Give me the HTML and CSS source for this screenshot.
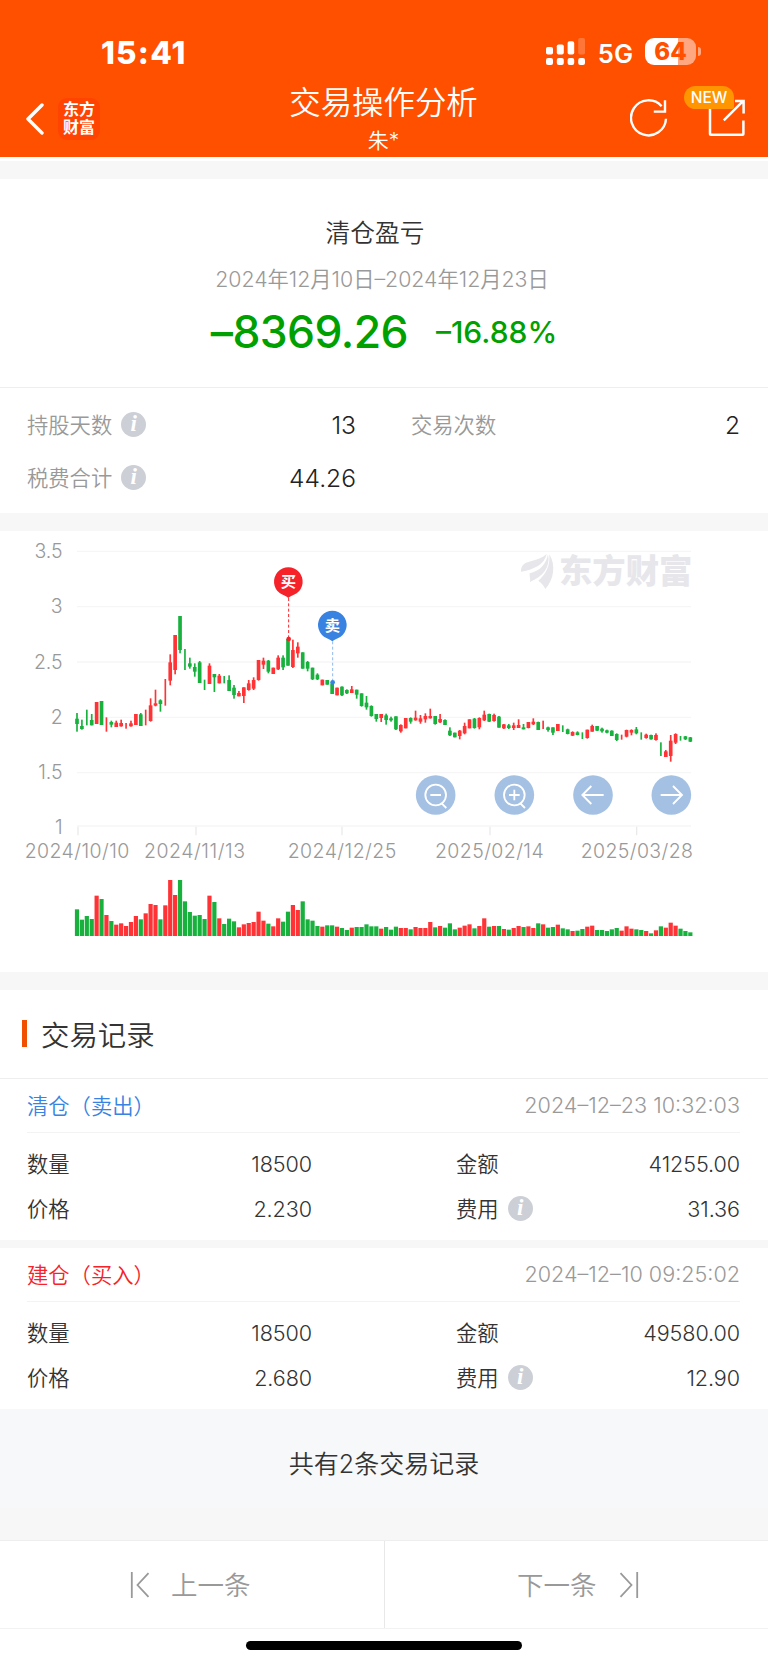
FILE: index.html
```html
<!DOCTYPE html>
<html lang="zh-CN">
<head>
    <meta charset="UTF-8">
    <meta name="viewport" content="width=device-width, initial-scale=1.0">
    <title>交易操作分析</title>
    <link rel="stylesheet" href="styles.css">
</head>

<body>
    <header class="header">
        <div class="status-bar">
            <span class="time">15:41</span>
            <div class="status-right">
                <svg class="signal" width="39" height="28" viewBox="0 0 39 28" fill="#fff">
                    <rect x="0" y="9" width="7" height="7.5" rx="1.8"/>
                    <rect x="10.8" y="6.5" width="7" height="10" rx="1.8"/>
                    <rect x="21.6" y="3.3" width="6.6" height="13.2" rx="1.8"/>
                    <rect x="32.2" y="0" width="6.8" height="16.5" rx="1.8" opacity=".22"/>
                    <rect x="0" y="20" width="7" height="7" rx="2"/>
                    <rect x="10.8" y="20" width="7" height="7" rx="2"/>
                    <rect x="21.6" y="20" width="6.6" height="7" rx="2"/>
                    <rect x="32.2" y="20" width="6.8" height="7" rx="2"/>
                </svg>
                <span class="network">5G</span>
                <div class="battery"><span>64</span></div>
            </div>
        </div>
        <div class="nav">
            <div class="nav-left">
                <svg width="18" height="32" viewBox="0 0 18 32" fill="none" stroke="#fff" stroke-width="3.4" stroke-linecap="round" stroke-linejoin="round">
                    <path d="M16 2L2 16l14 14"/>
                </svg>
                <div class="logo">东方<br>财富</div>
            </div>
            <div class="nav-title">
                <h1>交易操作分析</h1>
                <p>朱*</p>
            </div>
            <div class="nav-right">
                <svg width="38" height="38" viewBox="0 0 38 38" fill="none" stroke="#fff" stroke-width="2.4">
                    <path d="M36 19.8A17.5 17.5 0 1 1 31.6 7.2"/>
                    <path d="M35 1.2v11.4H23.8"/>
                </svg>
                <div class="share">
                    <svg width="38" height="38" viewBox="0 0 38 38" fill="none" stroke="#fff" stroke-width="2.5">
                        <path d="M2 8v27q0 .7.7.7h32q.7 0 .7-.7V21.4"/>
                        <path d="M15.8 21.4L35 2.2M27 2.1h8.6v12.3"/>
                    </svg>
                    <span class="badge">NEW</span>
                </div>
            </div>
        </div>
    </header>

    <section class="profit">
        <h2>清仓盈亏</h2>
        <p class="range">2024年12月10日–2024年12月23日</p>
        <div class="amount">
            <span class="money">–8369.26</span>
            <span class="percent">–16.88%</span>
        </div>
    </section>

    <section class="stats">
        <div class="stat"><span>持股天数</span><i class="info">i</i><b>13</b></div>
        <div class="stat"><span>交易次数</span><b>2</b></div>
        <div class="stat"><span>税费合计</span><i class="info">i</i><b>44.26</b></div>
    </section>

    <section class="chart">
        <!-- 3 viewBox units = 1px -->
        <svg width="768" height="441" viewBox="0 0 2304 1323">
            <g transform="translate(0 27)">
                <g class="grid">
                    <path d="M231 34H2073M231 200H2073M231 366H2073M231 532H2073M231 698H2073M231 858H2073"/>
                    <path class="ticks" d="M234 860v26M588 860v26M1026 860v26M1470 860v26M1910 860v26"/>
                </g>
                <g class="axis axis-y">
                    <text x="188" y="55">3.5</text>
                    <text x="188" y="220">3</text>
                    <text x="188" y="386">2.5</text>
                    <text x="188" y="551">2</text>
                    <text x="188" y="716">1.5</text>
                    <text x="188" y="881">1</text>
                </g>
                <g class="axis">
                    <text x="74" y="953" textLength="314">2024/10/10</text>
                    <text x="432" y="953" textLength="303">2024/11/13</text>
                    <text x="863" y="953" textLength="326">2024/12/25</text>
                    <text x="1305" y="953" textLength="326">2025/02/14</text>
                    <text x="1742" y="953" textLength="337">2025/03/28</text>
                </g>
                <g class="watermark">
                    <path d="M1563 95c0-20 10-27 32-32 18-4 33-10 45-21-8 32-36 46-77 53z"/>
                    <path d="M1590 126c2-8-2-15-1-26 30-6 50-28 55-57 8 38-14 66-54 83z"/>
                    <path d="M1636 147c-4-10-12-18-21-25 22-18 36-44 33-79 20 32 14 76-12 104z"/>
                    <text x="1677" y="130" textLength="400">东方财富</text>
                </g>
                <g id="candles"></g>
                <g id="volumes"></g>
                <g class="pin buy">
                    <path class="stem" d="M866 174V297"/>
                    <circle cx="866" cy="297" r="7"/>
                    <path d="M865 174c-8-7-15-8-25-14a43 43 0 1 1 50 0c-10 6-17 7-25 14z"/>
                    <text x="865" y="142">买</text>
                </g>
                <g class="pin sell">
                    <path class="stem" d="M998 304V427"/>
                    <circle cx="998" cy="427" r="7"/>
                    <path d="M997 304c-8-7-15-8-25-14a43 43 0 1 1 50 0c-10 6-17 7-25 14z"/>
                    <text x="997" y="272">卖</text>
                </g>
                <g class="tool" transform="translate(1307 765)">
                    <circle class="disc" r="59.5"/>
                    <circle r="31"/>
                    <path d="M-16 0h32M18 25l14 14"/>
                </g>
                <g class="tool" transform="translate(1543 765)">
                    <circle class="disc" r="59.5"/>
                    <circle r="31"/>
                    <path d="M-16 0h32M0-16v32M18 25l14 14"/>
                </g>
                <g class="tool" transform="translate(1779 765)">
                    <circle class="disc" r="59.5"/>
                    <path d="M32 0h-64M-5-27L-32 0l27 27"/>
                </g>
                <g class="tool" transform="translate(2014 765)">
                    <circle class="disc" r="59.5"/>
                    <path d="M-32 0h64M5-27L32 0L5 27"/>
                </g>
            </g>
        </svg>
    </section>

    <section class="records">
        <h2 class="records-title">交易记录</h2>
        <div class="record">
            <div class="record-head">
                <span class="type blue">清仓（卖出）</span>
                <time>2024–12–23 10:32:03</time>
            </div>
            <div class="record-body">
                <div class="cell"><span>数量</span><b>18500</b></div>
                <div class="cell"><span>金额</span><b>41255.00</b></div>
                <div class="cell"><span>价格</span><b>2.230</b></div>
                <div class="cell"><span>费用</span><i class="info">i</i><b>31.36</b></div>
            </div>
        </div>
        <div class="record">
            <div class="record-head">
                <span class="type red">建仓（买入）</span>
                <time>2024–12–10 09:25:02</time>
            </div>
            <div class="record-body">
                <div class="cell"><span>数量</span><b>18500</b></div>
                <div class="cell"><span>金额</span><b>49580.00</b></div>
                <div class="cell"><span>价格</span><b>2.680</b></div>
                <div class="cell"><span>费用</span><i class="info">i</i><b>12.90</b></div>
            </div>
        </div>
        <p class="total">共有2条交易记录</p>
    </section>

    <nav class="pager">
        <a class="prev">
            <svg width="20" height="28" viewBox="0 0 20 28" fill="none" stroke="#999" stroke-width="1.8">
                <path d="M1.8 1v26M18.5 2.2L7.5 14l11 11.8"/>
            </svg>
            <span>上一条</span>
        </a>
        <a class="next">
            <span>下一条</span>
            <svg width="20" height="28" viewBox="0 0 20 28" fill="none" stroke="#999" stroke-width="1.8">
                <path d="M18.2 1v26M1.5 2.2L12.5 14l-11 11.8"/>
            </svg>
        </a>
    </nav>
    <div class="home"><div class="home-bar"></div></div>

    <script src="script.js"></script>
</body>

</html>
```

FILE: styles.css
```css
* {
    margin: 0;
    padding: 0;
    box-sizing: border-box;
}

body {
    width: 768px;
    background: #f7f7f7;
    color: #333;
    font-family: Inter, 'Noto Sans CJK SC', sans-serif;
    font-weight: 350;
    white-space: nowrap;
}

h1, h2, b {
    font-weight: 350;
}

/* header */
.header {
    height: 161px;
    background: #ff5000;
    border-bottom: 4px solid #fff;
    color: #fff;
}

.status-bar {
    height: 78px;
    padding: 29px 67px 0 101px;
    display: flex;
    justify-content: space-between;
}

.time {
    height: 46px;
    line-height: 48px;
    font-size: 31.5px;
    font-weight: 800;
    letter-spacing: 1.2px;
}

.status-right {
    display: flex;
    align-items: center;
    height: 46px;
}

.network {
    margin: 2px 12px 0 13px;
    font-size: 25.5px;
    font-weight: 600;
}

.battery {
    position: relative;
    width: 51px;
    height: 27px;
    margin: -1px 5px 0 0;
    border-radius: 9px;
    background: linear-gradient(to right, #fff 64%, #ffa780 64%);
    color: #ff5000;
    text-align: center;
    line-height: 27px;
    font-size: 24px;
    font-weight: 800;
}

.battery::after {
    content: '';
    position: absolute;
    right: -5px;
    top: 9px;
    width: 3px;
    height: 9px;
    border-radius: 0 4px 4px 0;
    background: #ffa780;
}

.nav {
    height: 79px;
    padding: 0 22px 0 26px;
    display: grid;
    grid-template-columns: 240px 1fr 240px;
}

.nav-left {
    display: flex;
    align-items: center;
    gap: 14px;
    height: 81px;
}

.logo {
    width: 42px;
    height: 42px;
    padding-top: 2px;
    border-radius: 9px;
    background: #ff4300;
    text-align: center;
    font-size: 16px;
    line-height: 18px;
    font-weight: 700;
}

.nav-title {
    padding-right: 5px;
    text-align: center;
}

.nav-title h1 {
    height: 49px;
    line-height: 51px;
    font-size: 31.4px;
}

.nav-title p {
    line-height: 28px;
    font-size: 21px;
}

.nav-right {
    display: flex;
    justify-content: flex-end;
    align-items: center;
    gap: 40px;
    height: 80px;
}

.nav-right svg {
    display: block;
}

.share {
    position: relative;
}

.badge {
    position: absolute;
    left: -24px;
    top: -13px;
    width: 50px;
    height: 23px;
    border-radius: 12px 12px 2px 12px;
    background: #ff9500;
    text-align: center;
    font-size: 15.5px;
    line-height: 24px;
    font-weight: 500;
}

/* profit */
.profit {
    height: 208px;
    margin-top: 18px;
    padding-top: 36px;
    background: #fff;
    text-align: center;
}

.profit h2 {
    font-size: 24.7px;
    line-height: 36px;
    padding-right: 18px;
}

.range {
    margin-top: 13px;
    padding-right: 4px;
    color: #999;
    font-size: 21.3px;
    line-height: 30px;
}

.amount {
    display: flex;
    justify-content: center;
    align-items: center;
    gap: 28px;
    margin-top: 10px;
    height: 56px;
    color: #00a000;
}

.money {
    font-size: 44.5px;
    font-weight: 500;
    letter-spacing: -.6px;
}

.percent {
    padding-bottom: 1px;
    font-size: 30px;
    font-weight: 550;
}

/* stats */
.stats {
    height: 126px;
    padding: 10px 28px 0 27px;
    border-top: 1px solid #eee;
    background: #fff;
    display: grid;
    grid-template-columns: 329px 329px;
    grid-auto-rows: 53px;
    justify-content: space-between;
}

.stat, .cell {
    display: flex;
    align-items: center;
    font-size: 21.3px;
}

.stat span, .cell span {
    padding-bottom: 2px;
}

.stat span {
    color: #999;
}

.stat b {
    margin-left: auto;
    color: #222;
    font-size: 24.6px;
}

.info {
    width: 25px;
    height: 25px;
    margin-left: 9px;
    border-radius: 50%;
    background: #cccfd6;
    color: #fff;
    text-align: center;
    font-family: 'Liberation Serif', serif;
    font-size: 23px;
    line-height: 23px;
    font-style: italic;
    font-weight: 700;
}

/* chart */
.chart {
    height: 441px;
    margin-top: 18px;
    background: #fff;
}

.chart svg {
    display: block;
}

.grid path {
    stroke: #f6f6f6;
    stroke-width: 4;
}

.grid .ticks {
    stroke: #eaeaea;
}

.axis text {
    fill: #999;
    font-size: 58.5px;
}

.axis-y text {
    text-anchor: end;
}

.watermark {
    fill: #e6e6eb;
}

.watermark text {
    font-size: 100px;
    font-weight: 900;
}

.up {
    fill: #ff3335;
}

.down {
    fill: #18b13e;
}

.buy {
    fill: #f5222a;
    stroke: #f5222a;
}

.sell {
    fill: #3883e2;
    stroke: #3883e2;
}

.pin circle, .pin path {
    stroke-width: 0;
}

.pin .stem {
    stroke-width: 3;
    stroke-dasharray: 9 7;
}

.sell .stem {
    stroke: #8fb8ee;
}

.pin text {
    fill: #fff;
    stroke: none;
    font-size: 46px;
    font-weight: 700;
    text-anchor: middle;
}

.tool {
    fill: none;
    stroke: #fff;
    stroke-width: 5.5;
}

.tool .disc {
    fill: #a4c1e4;
    stroke: none;
}

/* records */
.records {
    margin-top: 18px;
}

.records-title {
    height: 88px;
    padding: 0 0 2px 22px;
    background: #fff;
    display: flex;
    align-items: center;
    font-size: 28.4px;
}

.records-title::before {
    content: '';
    width: 5px;
    height: 27px;
    margin-right: 14px;
    background: #f05000;
}

.record {
    height: 161px;
    padding: 0 28px 0 27px;
    background: #fff;
}

.records-title + .record {
    height: 162px;
    border-top: 1px solid #eee;
}

.record + .record {
    margin-top: 8px;
}

.record-head {
    height: 54px;
    padding-bottom: 1px;
    border-bottom: 1px solid #f3f3f3;
    display: flex;
    justify-content: space-between;
    align-items: center;
}

.type {
    padding-bottom: 2px;
    font-size: 21.3px;
    text-spacing-trim: space-all;
}

.blue {
    color: #3883e2;
}

.red {
    color: #f5222a;
}

time {
    color: #999;
    font-size: 21.6px;
}

.record-body {
    padding-top: 8px;
    display: grid;
    grid-template-columns: 285px 284px;
    grid-auto-rows: 45px;
    justify-content: space-between;
}

.cell b {
    margin-left: auto;
    font-size: 21.6px;
    letter-spacing: -.1px;
}

.total {
    height: 99px;
    padding-top: 5px;
    margin-bottom: 32px;
    background: #f7f8fa;
    text-align: center;
    line-height: 100px;
    font-size: 25px;
}

/* bottom */
.pager {
    height: 89px;
    border-top: 1px solid #eee;
    border-bottom: 1px solid #f2f2f2;
    background: #fff;
    display: grid;
    grid-template-columns: 385px 383px;
    color: #999;
    font-size: 26.5px;
}

.pager a {
    display: flex;
    align-items: center;
}

.pager span {
    padding-bottom: 2px;
}

.prev {
    padding-left: 130px;
    gap: 21px;
    border-right: 1px solid #e8e8e8;
}

.next {
    padding-left: 132px;
    gap: 22px;
}

.home {
    height: 36px;
    padding-top: 12px;
    background: #fff;
}

.home-bar {
    width: 276px;
    height: 9px;
    margin: 0 auto;
    border-radius: 5px;
    background: #000;
}
```

FILE: script.js
```js
// [up, volume, high, low, body top, body bottom], body is left out when there is only a wick
const days = [
    [0, 80, 519, 575, 536, 552], [0, 49, 539, 569, 558, 567], [0, 60, 509, 556], [0, 51, 522, 556, 540, 556],
    [1, 121, 486, 552, 486, 552], [0, 111, 483, 555, 483, 555], [1, 63, 532, 575], [0, 45, 542, 562, 546, 554],
    [1, 34, 542, 561, 548, 561], [1, 38, 539, 560, 549, 559], [1, 30, 549, 566], [1, 42, 542, 560, 550, 559],
    [1, 60, 522, 555, 522, 555], [0, 50, 519, 558, 523, 558], [1, 68, 509, 556], [1, 96, 475, 545, 496, 543],
    [1, 93, 449, 499, 490, 497], [0, 50, 478, 515, 481, 492], [1, 92, 417, 497], [1, 168, 343, 436, 367, 422],
    [1, 123, 285, 403, 285, 390], [0, 168, 228, 340, 228, 330], [0, 104, 327, 390], [0, 72, 353, 386, 370, 380],
    [0, 61, 370, 410, 381, 395], [0, 63, 363, 429, 367, 429], [0, 51, 419, 450], [1, 121, 370, 432, 377, 432],
    [0, 102, 402, 456, 402, 412], [1, 53, 402, 430, 407, 430], [0, 36, 408, 430], [0, 52, 406, 453, 420, 453],
    [0, 44, 435, 476, 443, 465], [1, 26, 453, 469, 459, 469], [1, 35, 442, 489, 442, 468], [1, 39, 420, 452, 430, 450],
    [1, 42, 412, 450, 420, 446], [1, 73, 360, 422, 360, 420], [1, 46, 353, 387, 362, 374], [0, 37, 360, 400, 362, 395],
    [1, 29, 383, 402, 383, 402], [1, 53, 346, 390, 353, 388], [0, 43, 346, 390, 353, 382], [0, 73, 297, 377, 297, 377],
    [1, 93, 299, 384, 330, 381], [1, 78, 307, 353, 320, 340], [0, 104, 337, 386, 337, 386], [0, 50, 363, 394, 366, 386],
    [0, 46, 383, 420, 383, 418], [0, 30, 400, 420, 404, 418], [1, 28, 419, 436, 419, 436], [0, 32, 420, 434, 420, 434],
    [0, 32, 430, 462, 430, 462], [1, 28, 443, 466, 443, 466], [0, 24, 439, 468, 440, 466], [0, 18, 448, 462, 450, 460],
    [1, 25, 438, 459, 448, 459], [0, 27, 449, 476, 449, 464], [0, 27, 460, 500, 460, 498], [0, 35, 468, 509, 488, 502],
    [0, 29, 496, 530, 498, 528], [0, 29, 522, 545, 522, 537], [1, 22, 522, 546, 522, 534], [0, 27, 521, 554, 526, 540],
    [0, 19, 530, 545, 535, 541], [0, 28, 529, 570, 529, 568], [1, 24, 553, 578, 555, 574], [1, 24, 534, 565, 534, 565],
    [0, 20, 532, 551, 534, 545], [1, 27, 512, 542, 533, 541], [1, 24, 525, 551, 535, 545], [1, 24, 520, 548, 528, 538],
    [1, 42, 506, 536, 528, 535], [0, 26, 528, 554, 528, 552], [1, 30, 522, 549, 537, 547], [0, 25, 538, 555, 540, 555],
    [0, 38, 562, 588, 572, 586], [0, 20, 578, 592, 578, 592], [1, 25, 570, 598, 572, 588], [1, 31, 548, 583, 558, 580],
    [1, 35, 538, 565, 538, 565], [0, 23, 534, 566, 536, 564], [1, 30, 532, 568, 534, 562], [1, 53, 512, 543, 524, 541],
    [0, 28, 521, 546, 522, 545], [1, 30, 521, 545, 525, 543], [0, 30, 528, 563, 530, 563], [1, 21, 552, 567, 553, 565],
    [0, 19, 552, 567, 556, 564], [1, 24, 548, 570, 556, 564], [1, 30, 538, 564, 555, 564], [0, 27, 552, 568, 562, 568],
    [1, 29, 546, 565, 546, 564], [1, 24, 535, 555, 545, 553], [0, 38, 545, 570, 546, 570], [1, 35, 542, 567],
    [0, 25, 560, 575, 562, 570], [0, 27, 562, 585, 562, 578], [1, 34, 552, 573, 552, 573], [0, 23, 556, 576],
    [0, 20, 566, 583, 568, 582], [1, 15, 574, 588, 576, 587], [0, 16, 574, 586, 577, 585], [0, 21, 577, 597],
    [1, 28, 569, 596, 569, 594], [1, 31, 554, 575, 558, 575], [0, 18, 558, 573, 558, 572], [0, 18, 563, 578, 566, 574],
    [0, 15, 569, 580, 571, 578], [0, 20, 571, 588, 572, 588], [0, 24, 580, 603, 582, 600], [1, 16, 584, 599],
    [1, 29, 569, 592, 570, 590], [1, 22, 568, 586, 570, 578], [0, 20, 561, 583, 568, 580], [0, 18, 577, 599],
    [1, 15, 581, 596, 584, 594], [0, 8, 584, 599, 585, 598], [1, 17, 580, 602, 585, 600], [0, 29, 607, 648],
    [1, 25, 630, 651, 634, 651], [1, 40, 585, 665, 602, 648], [1, 31, 580, 612, 582, 608], [0, 22, 588, 602],
    [0, 15, 588, 600, 589, 598], [0, 11, 591, 606, 592, 605]
];

const candles = document.getElementById('candles');
const volumes = document.getElementById('volumes');

function addRect(parent, x, y, width, height, up) {
    const rect = document.createElementNS('http://www.w3.org/2000/svg', 'rect');
    rect.setAttribute('x', x);
    rect.setAttribute('y', y);
    rect.setAttribute('width', width);
    rect.setAttribute('height', height);
    rect.setAttribute('class', up ? 'up' : 'down');
    parent.appendChild(rect);
}

days.forEach(([up, volume, high, low, top, bottom], i) => {
    const x = 231 + i * 14.72;
    addRect(candles, x - 2.5, high, 5, low - high, up);
    if (top) {
        addRect(candles, x - 5.5, top, 11, bottom - top, up);
    }
    addRect(volumes, x - 6.3, 1188 - volume, 12.6, volume, up);
});
```
